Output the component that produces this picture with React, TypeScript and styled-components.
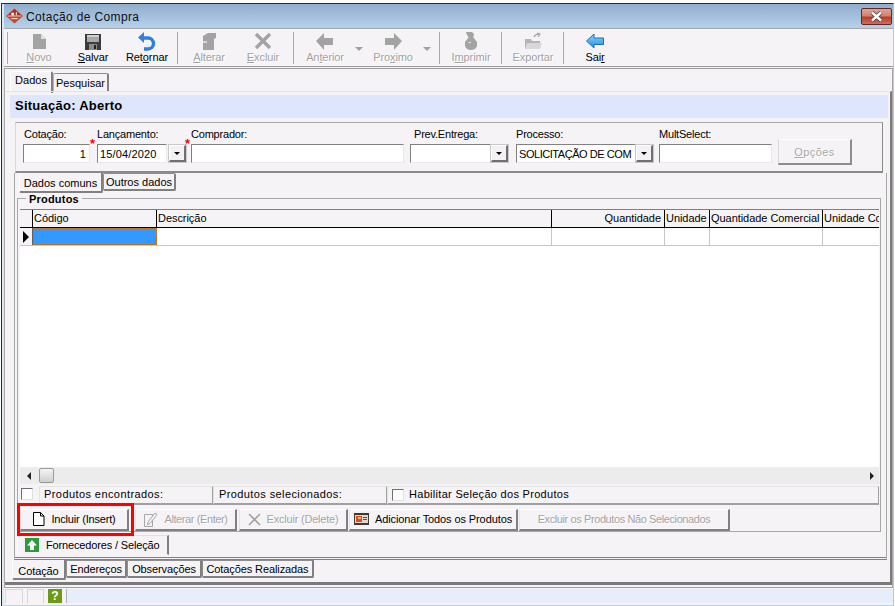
import React from 'react';
import styled, { createGlobalStyle } from 'styled-components';

const GlobalStyle = createGlobalStyle`
  html, body {
    margin: 0;
    padding: 0;
    background: #ffffff;
    overflow: hidden;
  }
  body, input, button {
    font-family: "Liberation Sans", Arial, sans-serif;
    font-size: 11px;
    color: #000000;
  }
  * {
    box-sizing: border-box;
  }
`;

const Win = styled.div`
  width: 893px;
  height: 603px;
  margin: 3px 0 0 1px;
  padding-left: 2px;
  background: #dce8f2;
  border-top: 1px solid #2c2c2c;
  border-left: 1px solid #2c2c2c;
  border-right: 1px solid #b5c8da;
  display: flex;
  flex-direction: column;
`;

const TitleBar = styled.div`
  height: 24px;
  flex: none;
  display: flex;
  align-items: center;
  padding: 0 1px 0 2px;
  background: linear-gradient(#92aece, #b6d0e9);
`;

const TitleText = styled.span`
  margin: 2px 0 0 3px;
  font-size: 12px;
  letter-spacing: 0.35px;
  color: #101010;
`;

const CloseButton = styled.div`
  margin-left: auto;
  width: 31px;
  height: 17px;
  border: 1px solid #5c2a2a;
  border-radius: 2px;
  background: linear-gradient(#e3a090 0%, #d08571 45%, #b5402a 55%, #cf6d55 100%);
  display: flex;
  align-items: center;
  justify-content: center;
`;

const Toolbar = styled.div`
  height: 41px;
  flex: none;
  display: flex;
  align-items: stretch;
  padding: 3px 0 2px;
  background: #f6f3f7;
  border-top: 1px solid #a8a8a8;
  border-bottom: 3px double #9c9c9c;
`;

const ToolSep = styled.div`
  width: 1px;
  margin: 0 4px 0 3px;
  background: #a9a9a9;
  height: 32px;
`;

const ToolButton = styled.div<{ $off?: boolean }>`
  width: 54px;
  display: flex;
  flex-direction: column;
  align-items: center;
  color: ${({ $off }) => ($off ? '#a3a3a3' : '#000000')};
  text-shadow: ${({ $off }) => ($off ? '1px 1px 0 #ffffff' : 'none')};
  svg {
    display: block;
  }
`;

const ToolIcon = styled.div`
  height: 19px;
`;

const ToolLabel = styled.span`
  line-height: 13px;
  letter-spacing: -0.1px;
  white-space: nowrap;
  u {
    text-underline-offset: 1px;
  }
`;

const DropArrow = styled.div<{ $w: number }>`
  width: ${({ $w }) => $w}px;
  padding: 15px 0 0 3px;
  &::before {
    content: '';
    display: block;
    width: 0;
    height: 0;
    border-left: 4px solid transparent;
    border-right: 4px solid transparent;
    border-top: 4px solid #a0a0a0;
  }
`;

const PageArea = styled.div`
  flex: 1;
  display: flex;
  flex-direction: column;
  min-height: 0;
  padding-bottom: 2px;
  background: #f6f3f7;
  border-left: 1px solid #a8a8a8;
  border-right: 1px solid #a8a8a8;
`;

const TabRow = styled.div<{ $h: number; $left: number }>`
  height: ${({ $h }) => $h}px;
  flex: none;
  display: flex;
  align-items: flex-start;
  padding-left: ${({ $left }) => $left}px;
`;

const Tab = styled.div<{ $active?: boolean; $w: number; $top?: number; $h: number }>`
  width: ${({ $w }) => $w}px;
  height: ${({ $h }) => $h}px;
  margin-top: ${({ $top }) => $top ?? 0}px;
  padding-bottom: ${({ $active }) => ($active ? 5 : 0)}px;
  display: flex;
  align-items: center;
  justify-content: center;
  white-space: nowrap;
  background: #f6f3f7;
  border-radius: 2px 2px 0 0;
  border-top: 1px solid ${({ $active }) => ($active ? '#ffffff' : '#8e8e8e')};
  border-left: 1px solid ${({ $active }) => ($active ? '#ffffff' : '#b5b5b5')};
  border-right: 2px solid #808080;
`;

const BottomTab = styled(Tab)`
  padding: ${({ $active }) => ($active ? '3px 0 0' : '0')};
  border-radius: 0 0 2px 2px;
  border-top: ${({ $active }) => ($active ? 'none' : '1px solid #8e8e8e')};
  border-left: 1px solid ${({ $active }) => ($active ? '#ffffff' : '#8e8e8e')};
  border-right: 2px solid #808080;
  border-bottom: 2px solid #808080;
  letter-spacing: -0.1px;
`;

const BoxTab = styled(Tab)`
  padding: ${({ $active }) => ($active ? '2px 0 0' : '0')};
  border-radius: ${({ $active }) => ($active ? '0 0 2px 2px' : '2px')};
  border-top: ${({ $active }) => ($active ? 'none' : '1px solid #8e8e8e')};
  border-left: 1px solid ${({ $active }) => ($active ? '#ffffff' : '#8e8e8e')};
  border-bottom: 2px solid #808080;
`;

const TabBody = styled.div`
  flex: 1;
  min-height: 0;
  display: flex;
  flex-direction: column;
  padding: 3px 2px 0 5px;
  border-top: 1px solid #e2e2e2;
  border-right: 2px solid #7a7a7a;
  border-bottom: 3px solid #7a7a7a;
`;

const SituationBar = styled.div`
  height: 23px;
  flex: none;
  display: flex;
  align-items: center;
  padding: 0 0 2px 5px;
  background: #dee6fe;
  font-size: 13px;
  font-weight: bold;
  letter-spacing: 0.25px;
`;

const FormPanel = styled.div`
  height: 51px;
  flex: none;
  display: flex;
  align-items: flex-start;
  margin: 4px 5px 0;
  padding: 5px 0 0 7px;
  border-top: 1px solid #a6a6a6;
  border-left: 1px solid #d8d8d8;
  border-right: 1px solid #8a8a8a;
  border-bottom: 2px solid #8a8a8a;
`;

const Field = styled.div<{ $w: number; $gap?: number }>`
  position: relative;
  width: ${({ $w }) => $w}px;
  margin-left: ${({ $gap }) => $gap ?? 0}px;
  flex: none;
`;

const FieldLabel = styled.div<{ $indent?: number }>`
  height: 16px;
  line-height: 13px;
  padding-left: ${({ $indent }) => $indent ?? 0}px;
  white-space: nowrap;
  letter-spacing: -0.2px;
`;

const FieldInputs = styled.div`
  display: flex;
  align-items: flex-start;
`;

const TextBox = styled.div<{ $right?: boolean; $w?: number; $tight?: boolean }>`
  height: 19px;
  width: ${({ $w }) => ($w ? `${$w}px` : '100%')};
  flex: none;
  display: flex;
  align-items: center;
  justify-content: ${({ $right }) => ($right ? 'flex-end' : 'flex-start')};
  padding: 0 3px 0 2px;
  overflow: hidden;
  white-space: nowrap;
  background: #ffffff;
  border-top: 1px solid #808080;
  border-left: 1px solid #808080;
  border-right: 1px solid #e8e8e8;
  border-bottom: 1px solid #e8e8e8;
  letter-spacing: ${({ $tight }) => ($tight ? '-0.45px' : '0.15px')};
`;

const ComboButton = styled.div<{ $ml?: number }>`
  width: 17px;
  height: 17px;
  flex: none;
  margin-left: ${({ $ml }) => $ml ?? 0}px;
  margin-top: 1px;
  display: flex;
  align-items: center;
  justify-content: center;
  background: #f4f1f5;
  border-top: 1px solid #ffffff;
  border-left: 1px solid #ffffff;
  border-right: 2px solid #707070;
  border-bottom: 2px solid #707070;
  box-shadow: 0 0 0 1px #c8c8c8;
  &::before {
    content: '';
    width: 0;
    height: 0;
    border-left: 3px solid transparent;
    border-right: 3px solid transparent;
    border-top: 3px solid #000000;
  }
`;

const Required = styled.span<{ $left: number }>`
  position: absolute;
  left: ${({ $left }) => $left}px;
  top: 9px;
  color: #ff0000;
  font-size: 13px;
  line-height: 13px;
  font-weight: bold;
`;

const OptionsButton = styled.div`
  width: 74px;
  height: 26px;
  margin: 11px 0 0 6px;
  flex: none;
  display: flex;
  align-items: center;
  justify-content: center;
  color: #a8a8a8;
  text-shadow: 1px 1px 0 #ffffff;
  letter-spacing: 0.4px;
  border-top: 1px solid #ffffff;
  border-left: 1px solid #d8d8d8;
  border-right: 2px solid #8c8c8c;
  border-bottom: 2px solid #8c8c8c;
`;

const Frame = styled.div`
  height: 387px;
  flex: none;
  margin: 0 1px 0 4px;
  padding-left: 2px;
  display: flex;
  flex-direction: column;
  border-left: 1px solid #a8a8a8;
  border-right: 1px solid #a8a8a8;
  border-bottom: 3px double #808080;
`;

const Group = styled.div`
  position: relative;
  width: 864px;
  height: 334px;
  flex: none;
  padding: 10px 1px 0 2px;
  border: 1px solid #a8a8a8;
`;

const GroupTitle = styled.span`
  position: absolute;
  left: 8px;
  top: -6px;
  padding: 0 3px;
  background: #f6f3f7;
  font-weight: bold;
  line-height: 12px;
  letter-spacing: 0.2px;
`;

const Grid = styled.div`
  height: 275px;
  display: flex;
  flex-direction: column;
  background: #ffffff;
  overflow: hidden;
`;

const GridHeader = styled.div`
  height: 19px;
  flex: none;
  display: flex;
  background: #f6f3f7;
  border-top: 1px solid #808080;
  border-bottom: 1px solid #000000;
`;

const HeadCell = styled.div<{ $w: number; $right?: boolean }>`
  width: ${({ $w }) => $w}px;
  flex: none;
  display: flex;
  align-items: center;
  justify-content: ${({ $right }) => ($right ? 'flex-end' : 'flex-start')};
  padding: 0 3px 2px 1px;
  overflow: hidden;
  white-space: nowrap;
  letter-spacing: -0.05px;
  border-right: 1px solid #000000;
  &:last-child {
    border-right: none;
  }
`;

const GridRow = styled.div`
  height: 18px;
  flex: none;
  display: flex;
  border-bottom: 1px solid #c6c6c6;
`;

const RowCell = styled.div<{ $w: number; $selected?: boolean }>`
  width: ${({ $w }) => $w}px;
  flex: none;
  border-right: 1px solid #c6c6c6;
  ${({ $selected }) => ($selected ? 'background: #3399ff; border: 1px dotted #b87020;' : '')}
`;

const RowMarker = styled(RowCell)`
  display: flex;
  align-items: center;
  justify-content: center;
  background: #f6f3f7;
  border-right: 1px solid #606060;
  &::before {
    content: '';
    width: 0;
    height: 0;
    border-top: 6px solid transparent;
    border-bottom: 6px solid transparent;
    border-left: 6px solid #000000;
  }
`;

const GridFill = styled.div`
  flex: 1;
`;

const ScrollBar = styled.div`
  height: 17px;
  flex: none;
  display: flex;
  align-items: center;
  padding: 0 5px 0 7px;
  background: #ececec;
`;

const ScrollArrow = styled.div<{ $dir: 'left' | 'right' }>`
  width: 0;
  height: 0;
  border-top: 4px solid transparent;
  border-bottom: 4px solid transparent;
  ${({ $dir }) => ($dir === 'left' ? 'border-right: 4px solid #222;' : 'border-left: 4px solid #222; margin-left: auto;')}
`;

const ScrollThumb = styled.div`
  width: 15px;
  height: 15px;
  margin-left: 8px;
  border: 1px solid #9a9a9a;
  border-radius: 2px;
  background: linear-gradient(#f4f4f4, #cfcfcf);
`;

const StatusRow = styled.div`
  height: 19px;
  margin-top: 2px;
  display: flex;
  align-items: stretch;
  padding-left: 1px;
`;

const CheckBox = styled.div<{ $mr: number }>`
  width: 12px;
  height: 12px;
  margin: 2px ${({ $mr }) => $mr}px 0 0;
  flex: none;
  background: #fdfdfd;
  border-top: 1px solid #707070;
  border-left: 1px solid #707070;
  border-right: 1px solid #e0e0e0;
  border-bottom: 1px solid #e0e0e0;
`;

const StatusCell = styled.div<{ $w?: number; $pad: number; $spacing: number }>`
  width: ${({ $w }) => ($w ? `${$w}px` : 'auto')};
  flex: ${({ $w }) => ($w ? 'none' : '1')};
  display: flex;
  align-items: center;
  padding: 0 0 2px ${({ $pad }) => $pad}px;
  white-space: nowrap;
  letter-spacing: ${({ $spacing }) => $spacing}px;
  border-top: 1px solid #e4e4e4;
  border-left: 1px solid #e4e4e4;
  border-right: 1px solid #a0a0a0;
  border-bottom: 2px solid #a0a0a0;
`;

const ButtonRow = styled.div`
  height: 22px;
  margin-top: 4px;
  display: flex;
  align-items: stretch;
`;

const Marked = styled.div`
  position: relative;
  display: flex;
`;

const RedMark = styled.div`
  position: absolute;
  top: -6px;
  bottom: -5px;
  left: -3px;
  right: -5px;
  border: 3px solid #ff0000;
`;

const ActionButton = styled.div<{ $w: number; $off?: boolean; $ml?: number; $sp?: number }>`
  width: ${({ $w }) => $w}px;
  margin-left: ${({ $ml }) => $ml ?? 0}px;
  flex: none;
  display: flex;
  align-items: center;
  justify-content: center;
  gap: 6px;
  padding-bottom: 1px;
  white-space: nowrap;
  letter-spacing: ${({ $sp }) => $sp ?? -0.1}px;
  color: ${({ $off }) => ($off ? '#a3a3a3' : '#000000')};
  text-shadow: ${({ $off }) => ($off ? '1px 1px 0 #ffffff' : 'none')};
  border-top: 1px solid #ffffff;
  border-left: 1px solid #e4e4e4;
  border-right: 2px solid #808080;
  border-bottom: 2px solid #808080;
  svg {
    flex: none;
  }
`;

const SupplierRow = styled.div`
  height: 24px;
  flex: none;
  padding: 3px 0 0;
`;

const SupplierTab = styled.div`
  width: 152px;
  height: 20px;
  display: flex;
  align-items: center;
  gap: 7px;
  padding: 0 0 1px 7px;
  white-space: nowrap;
  letter-spacing: -0.15px;
  border-top: 1px solid #e0e0e0;
  border-left: 1px solid #ffffff;
  border-right: 2px solid #808080;
  border-bottom: 1px solid #f6f3f7;
  svg {
    flex: none;
  }
`;

const StatusBar = styled.div`
  height: 19px;
  flex: none;
  display: flex;
  align-items: stretch;
  gap: 4px;
  padding: 1px 0 2px 1px;
  background: #f6f3f7;
  border-top: 1px solid #a0a0a0;
  border-bottom: 1px solid #b6d0e0;
`;

const BarCell = styled.div<{ $w: number }>`
  width: ${({ $w }) => $w}px;
  flex: none;
  border: 1px solid #d8d8d8;
  border-bottom: none;
`;

const HelpIcon = styled.div`
  width: 14px;
  flex: none;
  display: flex;
  align-items: center;
  justify-content: center;
  color: #ffffff;
  font-weight: bold;
  font-size: 12px;
  background: #6c9a12;
`;

const BarMessage = styled.div`
  flex: 1;
  background: #e6edfb;
  border-left: 1px solid #b0b0b0;
`;

const LogoIcon = () => (
  <svg width="17" height="16" viewBox="0 0 19 17">
    <path d="M9.5 0 19 8.5 9.5 17 0 8.5Z" fill="#c8452e" />
    <path d="M9.5 1 17 8H2Z" fill="#a83020" />
    <path d="M6 5h3v3H6zM11 4h1v4h-1z" fill="#ffffff" />
    <path d="M2 8.5h15" stroke="#f0d0c0" />
    <path d="M6 11h7v1H6z" fill="#ffffff" />
  </svg>
);

const CloseGlyph = () => (
  <svg width="15" height="11" viewBox="0 0 15 11">
    <path d="M3 1.5 12 9.5M12 1.5 3 9.5" stroke="#3c3c4c" strokeWidth="4" />
    <path d="M3 1.5 12 9.5M12 1.5 3 9.5" stroke="#ffffff" strokeWidth="2.4" />
  </svg>
);

const NewIcon = () => (
  <svg width="18" height="19" viewBox="0 0 18 19">
    <path d="M3 2h8l5 5v10H3z" fill="#a3a3a3" />
    <path d="M11 2v5h5z" fill="#e2e2e2" />
  </svg>
);

const SaveIcon = () => (
  <svg width="18" height="19" viewBox="0 0 18 19">
    <path d="M1 2h16v16H1z" fill="#3c3c3c" />
    <path d="M3 3h12v7H3z" fill="#a8a8a8" />
    <path d="M3 3h12v2H3z" fill="#d0d0d0" />
    <path d="M5 12h8v6H5z" fill="#8c8c8c" />
    <path d="M10 13h2v4h-2z" fill="#222222" />
  </svg>
);

const UndoIcon = () => (
  <svg width="18" height="19" viewBox="0 0 18 19">
    <path d="M6 6h4a5 5 0 0 1 0 11H6" fill="none" stroke="#2f80dc" strokeWidth="3.4" />
    <path d="M0 5.5 6 0v11z" fill="#2f80dc" />
  </svg>
);

const EditIcon = () => (
  <svg width="18" height="19" viewBox="0 0 18 19">
    <path d="M3 4l5-3h8v5l-2 1v11H3z" fill="#a3a3a3" />
    <path d="M3 9h4v2H3z" fill="#d4d4d4" />
  </svg>
);

const CrossIcon = () => (
  <svg width="18" height="19" viewBox="0 0 18 19">
    <path d="M2 2 16 16M16 2 2 16" stroke="#a3a3a3" strokeWidth="3.4" />
  </svg>
);

const ArrowIcon = ({ flip, color = '#a3a3a3' }: { flip?: boolean; color?: string }) => (
  <svg width="18" height="19" viewBox="0 0 18 19" style={flip ? { transform: 'scaleX(-1)' } : undefined}>
    <path d="M0 9 8 1v5h9v7H8v5z" fill={color} />
  </svg>
);

const PrintIcon = () => (
  <svg width="18" height="19" viewBox="0 0 18 19">
    <path d="M4 0h6l2 2-1 4H7L5 3z" fill="#a3a3a3" />
    <path d="M7 5h4l4 5q1 8-6 8t-6-8z" fill="#a3a3a3" />
    <path d="M6 10h3v1H6z" fill="#e0e0e0" />
  </svg>
);

const ExportIcon = () => (
  <svg width="18" height="19" viewBox="0 0 18 19">
    <path d="M1 7h6l1 2h8v8H1z" fill="#b4b4b4" />
    <path d="M3 11h15l-2 6H1z" fill="#d8d8d8" />
    <path d="M10 5c1-2 3-3 5-3M13 1l3 1-2 3" fill="none" stroke="#a3a3a3" strokeWidth="1.2" />
  </svg>
);

const ExitIcon = () => (
  <svg width="18" height="19" viewBox="0 0 18 19">
    <defs>
      <linearGradient id="exitFill" x1="0" y1="0" x2="0" y2="1">
        <stop offset="0" stopColor="#8fd4fa" />
        <stop offset="1" stopColor="#1f8fe0" />
      </linearGradient>
    </defs>
    <path d="M0.5 9 8 2v4h9.5v6.500H8V16z" fill="url(#exitFill)" stroke="#1c6fb8" />
  </svg>
);

const PageIcon = () => (
  <svg width="13" height="14" viewBox="0 0 13 14">
    <path d="M1.500 0.500h7l3.500 3.500v9.500H1.500z" fill="#ffffff" stroke="#000000" />
    <path d="M8.500 0.500v3.500h3.500" fill="none" stroke="#000000" />
  </svg>
);

const PencilPageIcon = () => (
  <svg width="15" height="15" viewBox="0 0 15 15">
    <path d="M1.500 2.500h8v12h-8z" fill="none" stroke="#a8a8a8" />
    <path d="M5 10l7-9 2 1.500-7 9-2.500 1z" fill="#f6f3f7" stroke="#a8a8a8" />
  </svg>
);

const ThinCross = () => (
  <svg width="13" height="13" viewBox="0 0 13 13">
    <path d="M1 1 12 12M12 1 1 12" stroke="#a3a3a3" strokeWidth="1.600" />
  </svg>
);

const AddAllIcon = () => (
  <svg width="15" height="12" viewBox="0 0 15 12">
    <path d="M0 0h15v12H0z" fill="#3a3a3a" />
    <path d="M1 2h13v8H1z" fill="#e0d8d0" />
    <path d="M2 3h6v6H2z" fill="#d8501c" />
    <path d="M4 4h3v2H4z" fill="#f4b860" />
    <path d="M9 4h4v1H9zM9 6h4v1H9z" fill="#555555" />
  </svg>
);

const GreenUpIcon = () => (
  <svg width="14" height="14" viewBox="0 0 14 14">
    <path d="M0 0h14v14H0z" fill="#2f9a3c" />
    <path d="M7 2 12 7.500H9V12H5V7.500H2z" fill="#ffffff" />
  </svg>
);

const columns = [
  { key: 'codigo', w: 124, label: 'Código' },
  { key: 'descricao', w: 395, label: 'Descrição' },
  { key: 'qtd', w: 113, label: 'Quantidade', right: true },
  { key: 'un', w: 45, label: 'Unidade' },
  { key: 'qtdcom', w: 113, label: 'Quantidade Comercial' },
  { key: 'uncom', w: 57, label: 'Unidade Comercial' },
];

const App = () => {
  return (
    <>
      <GlobalStyle />
      <Win>
        <TitleBar>
          <LogoIcon />
          <TitleText>Cotação de Compra</TitleText>
          <CloseButton>
            <CloseGlyph />
          </CloseButton>
        </TitleBar>

        <Toolbar>
          <ToolSep />
          <ToolButton $off>
            <ToolIcon><NewIcon /></ToolIcon>
            <ToolLabel><u>N</u>ovo</ToolLabel>
          </ToolButton>
          <ToolButton>
            <ToolIcon><SaveIcon /></ToolIcon>
            <ToolLabel><u>S</u>alvar</ToolLabel>
          </ToolButton>
          <ToolButton>
            <ToolIcon><UndoIcon /></ToolIcon>
            <ToolLabel>Ret<u>o</u>rnar</ToolLabel>
          </ToolButton>
          <ToolSep />
          <ToolButton $off>
            <ToolIcon><EditIcon /></ToolIcon>
            <ToolLabel><u>A</u>lterar</ToolLabel>
          </ToolButton>
          <ToolButton $off>
            <ToolIcon><CrossIcon /></ToolIcon>
            <ToolLabel><u>E</u>xcluir</ToolLabel>
          </ToolButton>
          <ToolSep />
          <ToolButton $off>
            <ToolIcon><ArrowIcon /></ToolIcon>
            <ToolLabel>An<u>t</u>erior</ToolLabel>
          </ToolButton>
          <DropArrow $w={14} />
          <ToolButton $off>
            <ToolIcon><ArrowIcon flip /></ToolIcon>
            <ToolLabel>Pro<u>x</u>imo</ToolLabel>
          </ToolButton>
          <DropArrow $w={16} />
          <ToolSep />
          <ToolButton $off>
            <ToolIcon><PrintIcon /></ToolIcon>
            <ToolLabel>I<u>m</u>primir</ToolLabel>
          </ToolButton>
          <ToolSep />
          <ToolButton $off>
            <ToolIcon><ExportIcon /></ToolIcon>
            <ToolLabel>Exportar</ToolLabel>
          </ToolButton>
          <ToolSep />
          <ToolButton>
            <ToolIcon><ExitIcon /></ToolIcon>
            <ToolLabel>Sai<u>r</u></ToolLabel>
          </ToolButton>
        </Toolbar>

        <PageArea>
          <TabRow $h={22} $left={5}>
            <Tab $active $w={43} $h={22} $top={2}>Dados</Tab>
            <Tab $w={56} $h={18} $top={4}>Pesquisar</Tab>
          </TabRow>

          <TabBody>
            <SituationBar>Situação: Aberto</SituationBar>

            <FormPanel>
              <Field $w={67}>
                <FieldLabel $indent={1}>Cotação:</FieldLabel>
                <TextBox $right>1</TextBox>
                <Required $left={67}>*</Required>
              </Field>
              <Field $w={89} $gap={7}>
                <FieldLabel>Lançamento:</FieldLabel>
                <FieldInputs>
                  <TextBox $w={70}>15/04/2020</TextBox>
                  <ComboButton $ml={2} />
                </FieldInputs>
                <Required $left={88}>*</Required>
              </Field>
              <Field $w={213} $gap={5}>
                <FieldLabel>Comprador:</FieldLabel>
                <TextBox />
              </Field>
              <Field $w={98} $gap={6}>
                <FieldLabel $indent={4}>Prev.Entrega:</FieldLabel>
                <FieldInputs>
                  <TextBox $w={81} />
                  <ComboButton />
                </FieldInputs>
              </Field>
              <Field $w={137} $gap={8}>
                <FieldLabel>Processo:</FieldLabel>
                <FieldInputs>
                  <TextBox $w={120} $tight>SOLICITAÇÃO DE COM</TextBox>
                  <ComboButton />
                </FieldInputs>
              </Field>
              <Field $w={113} $gap={6}>
                <FieldLabel>MultSelect:</FieldLabel>
                <TextBox />
              </Field>
              <OptionsButton><u>O</u>pções</OptionsButton>
            </FormPanel>

            <Frame>
              <TabRow $h={25} $left={2}>
                <BoxTab $active $w={84} $h={20}>Dados comuns</BoxTab>
                <BoxTab $w={73} $h={18}>Outros dados</BoxTab>
              </TabRow>

              <Group>
                <GroupTitle>Produtos</GroupTitle>
                <Grid>
                  <GridHeader>
                    <HeadCell $w={13} />
                    {columns.map((c) => (
                      <HeadCell key={c.key} $w={c.w} $right={c.right}>{c.label}</HeadCell>
                    ))}
                  </GridHeader>
                  <GridRow>
                    <RowMarker $w={13} />
                    {columns.map((c, i) => (
                      <RowCell key={c.key} $w={c.w} $selected={i === 0} />
                    ))}
                  </GridRow>
                  <GridFill />
                  <ScrollBar>
                    <ScrollArrow $dir="left" />
                    <ScrollThumb />
                    <ScrollArrow $dir="right" />
                  </ScrollBar>
                </Grid>

                <StatusRow>
                  <CheckBox $mr={6} />
                  <StatusCell $w={174} $pad={4} $spacing={0.42}>Produtos encontrados:</StatusCell>
                  <StatusCell $w={174} $pad={5} $spacing={0.4}>Produtos selecionados:</StatusCell>
                  <StatusCell $pad={4} $spacing={0.3}>
                    <CheckBox $mr={5} />
                    Habilitar Seleção dos Produtos
                  </StatusCell>
                </StatusRow>

                <ButtonRow>
                  <Marked>
                    <ActionButton $w={109} $sp={-0.2}>
                      <PageIcon />
                      Incluir (Insert)
                    </ActionButton>
                    <RedMark />
                  </Marked>
                  <ActionButton $w={102} $off $ml={6} $sp={-0.4}>
                    <PencilPageIcon />
                    Alterar (Enter)
                  </ActionButton>
                  <ActionButton $w={109} $off $ml={2} $sp={-0.2}>
                    <ThinCross />
                    Excluir (Delete)
                  </ActionButton>
                  <ActionButton $w={169} $ml={1}>
                    <AddAllIcon />
                    Adicionar Todos os Produtos
                  </ActionButton>
                  <ActionButton $w={211} $off $ml={1} $sp={-0.4}>
                    Excluir os Produtos Não Selecionados
                  </ActionButton>
                </ButtonRow>
              </Group>

              <SupplierRow>
                <SupplierTab>
                  <GreenUpIcon />
                  Fornecedores / Seleção
                </SupplierTab>
              </SupplierRow>
            </Frame>

            <TabRow $h={20} $left={2}>
              <BottomTab $active $w={54} $h={20}>Cotação</BottomTab>
              <BottomTab $w={61} $h={18}>Endereços</BottomTab>
              <BottomTab $w={75} $h={18}>Observações</BottomTab>
              <BottomTab $w={112} $h={18}>Cotações Realizadas</BottomTab>
            </TabRow>
          </TabBody>
        </PageArea>

        <StatusBar>
          <BarCell $w={18} />
          <BarCell $w={17} />
          <HelpIcon>?</HelpIcon>
          <BarMessage />
        </StatusBar>
      </Win>
    </>
  );
};

export default App;
